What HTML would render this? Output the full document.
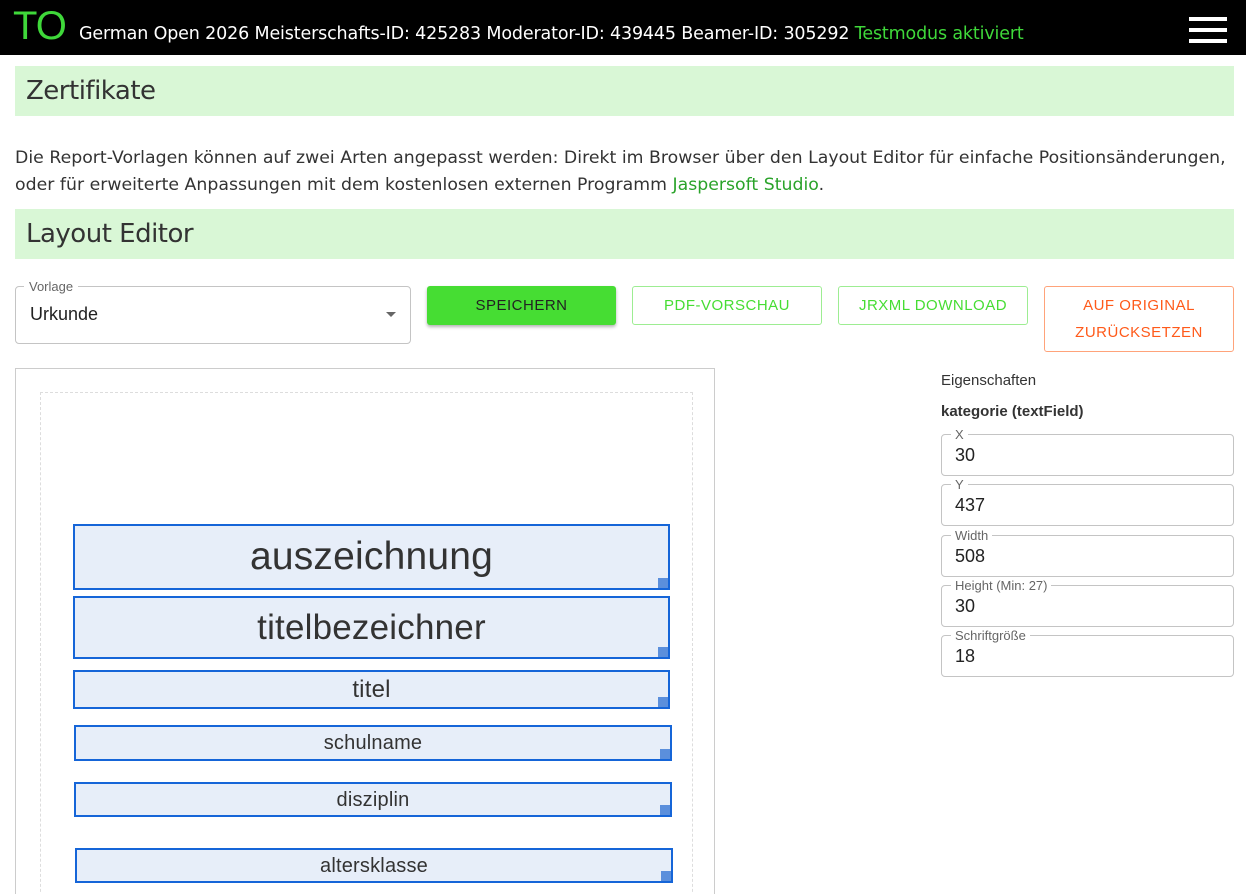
<!DOCTYPE html>
<html><head><meta charset="utf-8"><style>
*{box-sizing:border-box;margin:0;padding:0}
html,body{width:1246px;height:894px;overflow:hidden}
body{background:#fff;font-family:"DejaVu Sans","Liberation Sans",sans-serif;color:#333;position:relative}
.hdr{position:absolute;left:0;top:0;width:1246px;height:55px;background:#000}
.abs{position:absolute;white-space:nowrap}
.band{position:absolute;left:15px;width:1219px;height:50px;background:#d9f7d6;font-size:26px;padding-left:11px;line-height:50px;color:#333;letter-spacing:-0.5px}
.btn{position:absolute;font-family:"Liberation Sans",sans-serif;font-size:15px;text-align:center;border-radius:3px;letter-spacing:0.5px}
.fld{position:absolute;left:941px;width:293px;height:42px;border:1px solid #c4c4c4;border-radius:4px;font-family:"Liberation Sans",sans-serif}
.fld span{position:absolute;left:9px;top:-8px;background:#fff;padding:0 4px;font-size:13px;color:#666}
.fld b{position:absolute;left:13px;top:10px;font-size:18px;font-weight:normal;color:#222}
.box{position:absolute;border:2px solid #1565d8;background:#e7eef9;text-align:center;font-family:"Liberation Sans",sans-serif;color:#333;letter-spacing:0.2px}
.box::after{content:"";position:absolute;right:0;bottom:0;width:10px;height:10px;background:#5b8fdc}
</style></head><body>
<div class="hdr"></div>
<div class="abs" style="left:13px;top:4px;font-size:40px;color:#3fd83a;font-family:'Liberation Sans',sans-serif;letter-spacing:-1px">TO</div>
<div class="abs" style="left:79px;top:24px;font-size:17.5px;color:#fff;letter-spacing:-0.15px">German Open 2026 Meisterschafts-ID: 425283 Moderator-ID: 439445 Beamer-ID: 305292 <span style="color:#3fd83a">Testmodus aktiviert</span></div>
<div class="abs" style="left:1189px;top:17px;width:38px;height:4px;background:#fff"></div>
<div class="abs" style="left:1189px;top:28px;width:38px;height:4px;background:#fff"></div>
<div class="abs" style="left:1189px;top:39px;width:38px;height:4px;background:#fff"></div>

<div class="band" style="top:66px">Zertifikate</div>
<div class="abs" style="left:15px;top:145px;font-size:17.3px;line-height:27px;letter-spacing:0.02px">Die Report-Vorlagen können auf zwei Arten angepasst werden: Direkt im Browser über den Layout Editor für einfache Positionsänderungen,<br>oder für erweiterte Anpassungen mit dem kostenlosen externen Programm <span style="color:#2aa32a">Jaspersoft Studio</span>.</div>
<div class="band" style="top:209px">Layout Editor</div>

<div class="abs" style="left:15px;top:286px;width:396px;height:58px;border:1px solid #c4c4c4;border-radius:4px;font-family:'Liberation Sans',sans-serif">
 <span style="position:absolute;left:8px;top:-8px;background:#fff;padding:0 5px;font-size:13px;color:#666">Vorlage</span>
 <span style="position:absolute;left:14px;top:17px;font-size:18px;color:#222">Urkunde</span>
 <span style="position:absolute;right:14px;top:25px;border-left:5px solid transparent;border-right:5px solid transparent;border-top:5px solid #666"></span>
</div>
<div class="btn" style="left:427px;top:286px;width:189px;height:39px;line-height:39px;background:#46dd33;color:#222;box-shadow:0 2px 3px rgba(0,0,0,.3)">SPEICHERN</div>
<div class="btn" style="left:632px;top:286px;width:190px;height:39px;line-height:37px;border:1px solid #9ded92;color:#46dd33">PDF-VORSCHAU</div>
<div class="btn" style="left:838px;top:286px;width:190px;height:39px;line-height:37px;border:1px solid #9ded92;color:#46dd33">JRXML DOWNLOAD</div>
<div class="btn" style="left:1044px;top:286px;width:190px;height:66px;line-height:27px;padding-top:5px;border:1px solid #ffa37a;color:#ff5a1a">AUF ORIGINAL<br>ZURÜCKSETZEN</div>

<div class="abs" style="left:15px;top:368px;width:700px;height:540px;border:1px solid #ccc"></div>
<div class="abs" style="left:40px;top:392px;width:653px;height:520px;border:1px dashed #ddd"></div>
<div class="box" style="left:73px;top:524px;width:597px;height:66px;font-size:39px;line-height:62px">auszeichnung</div>
<div class="box" style="left:73px;top:596px;width:597px;height:63px;font-size:35px;line-height:59px">titelbezeichner</div>
<div class="box" style="left:73px;top:670px;width:597px;height:39px;font-size:24px;line-height:35px">titel</div>
<div class="box" style="left:74px;top:725px;width:598px;height:36px;font-size:20px;line-height:32px">schulname</div>
<div class="box" style="left:74px;top:782px;width:598px;height:35px;font-size:20px;line-height:33px">disziplin</div>
<div class="box" style="left:75px;top:848px;width:598px;height:35px;font-size:20px;line-height:33px">altersklasse</div>

<div class="abs" style="left:941px;top:372px;font-size:15px;font-family:'Liberation Sans',sans-serif">Eigenschaften</div>
<div class="abs" style="left:941px;top:403px;font-size:15px;font-weight:bold;font-family:'Liberation Sans',sans-serif">kategorie (textField)</div>
<div class="fld" style="top:434px"><span>X</span><b>30</b></div>
<div class="fld" style="top:484px"><span>Y</span><b>437</b></div>
<div class="fld" style="top:535px"><span>Width</span><b>508</b></div>
<div class="fld" style="top:585px"><span>Height (Min: 27)</span><b>30</b></div>
<div class="fld" style="top:635px"><span>Schriftgröße</span><b>18</b></div>
</body></html>
